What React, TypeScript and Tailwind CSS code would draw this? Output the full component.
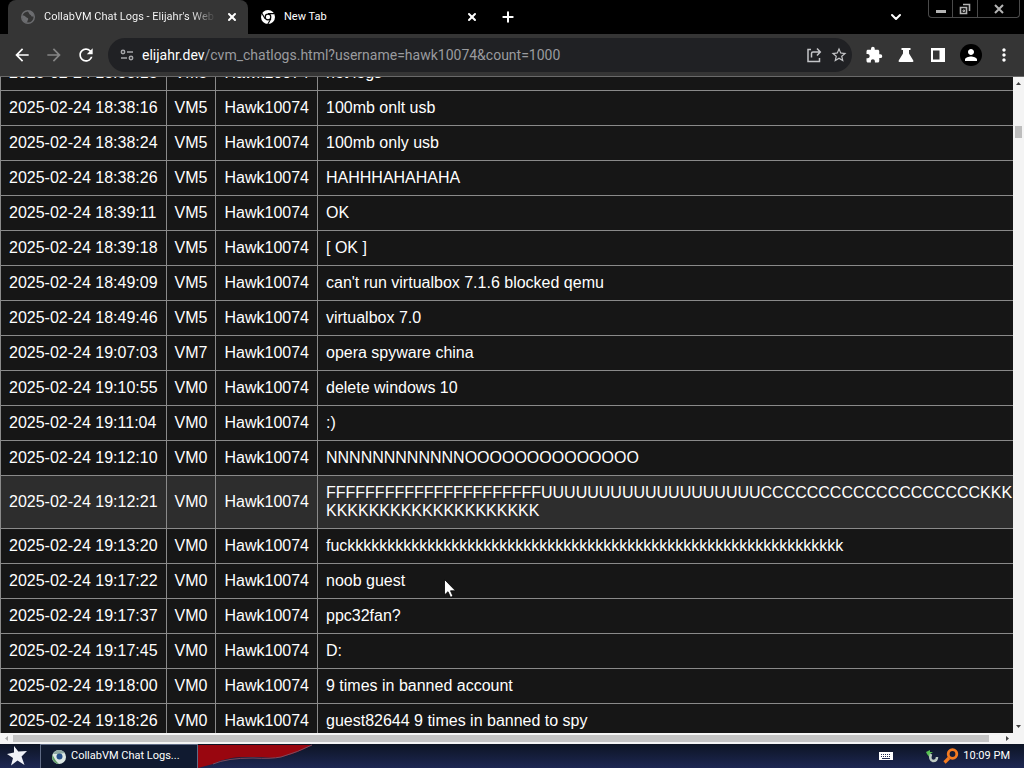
import React from "react";
import { ChevronDown, Plus, X } from "lucide-react";
import {
  MdArrowBack,
  MdArrowForward,
  MdExtension,
  MdMoreVert,
  MdPerson,
  MdRefresh,
  MdStarBorder,
} from "react-icons/md";

type LogRow = {
  time: string;
  vm: string;
  message: string;
  hovered?: boolean;
};

const USERNAME = "Hawk10074";

const rows: LogRow[] = [
  { time: "2025-02-24 18:38:13", vm: "VM5", message: "not logs" },
  { time: "2025-02-24 18:38:16", vm: "VM5", message: "100mb onlt usb" },
  { time: "2025-02-24 18:38:24", vm: "VM5", message: "100mb only usb" },
  { time: "2025-02-24 18:38:26", vm: "VM5", message: "HAHHHAHAHAHA" },
  { time: "2025-02-24 18:39:11", vm: "VM5", message: "OK" },
  { time: "2025-02-24 18:39:18", vm: "VM5", message: "[ OK ]" },
  {
    time: "2025-02-24 18:49:09",
    vm: "VM5",
    message: "can't run virtualbox 7.1.6 blocked qemu",
  },
  { time: "2025-02-24 18:49:46", vm: "VM5", message: "virtualbox 7.0" },
  { time: "2025-02-24 19:07:03", vm: "VM7", message: "opera spyware china" },
  { time: "2025-02-24 19:10:55", vm: "VM0", message: "delete windows 10" },
  { time: "2025-02-24 19:11:04", vm: "VM0", message: ":)" },
  {
    time: "2025-02-24 19:12:10",
    vm: "VM0",
    message: "NNNNNNNNNNNNOOOOOOOOOOOOOO",
  },
  {
    time: "2025-02-24 19:12:21",
    vm: "VM0",
    message:
      "FFFFFFFFFFFFFFFFFFFFFFUUUUUUUUUUUUUUUUUUUCCCCCCCCCCCCCCCCCCCKKKKKKKKKKKKKKKKKKKKKKK",
    hovered: true,
  },
  {
    time: "2025-02-24 19:13:20",
    vm: "VM0",
    message: "fuckkkkkkkkkkkkkkkkkkkkkkkkkkkkkkkkkkkkkkkkkkkkkkkkkkkkkkkkkkkkkk",
  },
  { time: "2025-02-24 19:17:22", vm: "VM0", message: "noob guest" },
  { time: "2025-02-24 19:17:37", vm: "VM0", message: "ppc32fan?" },
  { time: "2025-02-24 19:17:45", vm: "VM0", message: "D:" },
  { time: "2025-02-24 19:18:00", vm: "VM0", message: "9 times in banned account" },
  {
    time: "2025-02-24 19:18:26",
    vm: "VM0",
    message: "guest82644 9 times in banned to spy",
  },
];

function ChromeLogo() {
  return (
    <svg viewBox="0 0 16 16" className="size-4 shrink-0" aria-hidden="true">
      <circle cx="8" cy="8" r="7" fill="#fff" />
      <circle cx="8" cy="8" r="3.4" fill="#000" />
      <circle cx="8" cy="8" r="2.2" fill="#fff" />
      <path
        d="M8 4.6h6.4M5.1 9.7 1.9 4.2M10.9 9.7l-3.2 5.5"
        stroke="#000"
        strokeWidth="1.1"
        fill="none"
      />
    </svg>
  );
}

function GlobeIcon() {
  return (
    <svg viewBox="0 0 16 16" className="size-4 shrink-0" aria-hidden="true">
      <circle cx="8" cy="8" r="6.3" fill="none" stroke="#6c6d70" strokeWidth="1.4" />
      <path
        d="M2 6.5c2-.4 3 .2 3.600 1.300.6 1.200 2.400.6 2.600 2 .2 1.300-1 1.500-1 4l-2.200-.5C3 12 1.800 10 2 6.500zM8 2c0 1.500 1 1.700 1.200 2.700.2 1.100 1.600.8 2 2 .4 1.100 1.700.8 2.800.8C13.800 4.500 11.500 2 8 2z"
        fill="#6c6d70"
      />
    </svg>
  );
}

function TabStrip() {
  return (
    <header className="flex h-[34px] shrink-0 items-stretch bg-black pl-2">
      <div className="flex w-60 items-center gap-2 rounded-t-lg bg-[#353535] pl-3 pr-2 text-white">
        <GlobeIcon />
        <span className="min-w-0 flex-1 overflow-hidden whitespace-nowrap bg-linear-to-r from-white from-85% to-transparent bg-clip-text text-[11px] text-transparent">
          CollabVM Chat Logs - Elijahr's Web
        </span>
        <button aria-label="Close tab" className="grid size-4 place-items-center">
          <X className="size-3" strokeWidth={4} />
        </button>
      </div>
      <div className="flex w-60 items-center gap-2 pl-3 pr-2 text-white">
        <ChromeLogo />
        <span className="min-w-0 flex-1 text-[11px]">New Tab</span>
        <button aria-label="Close tab" className="grid size-4 place-items-center">
          <X className="size-3" strokeWidth={4} />
        </button>
      </div>
      <button aria-label="New tab" className="grid w-10 place-items-center text-white">
        <Plus className="size-4" strokeWidth={3} />
      </button>
      <div className="flex-1" />
      <button aria-label="Search tabs" className="mr-6 text-white">
        <ChevronDown className="size-4" strokeWidth={3} />
      </button>
      <div className="mr-1 flex h-[18px] rounded-b border border-t-0 border-[#4a4a4a] text-[#b4b4b4]">
        <button aria-label="Minimize" className="grid w-6 place-items-center border-r border-[#4a4a4a]">
          <svg viewBox="0 0 12 12" className="size-3">
            <path d="M1 7h10v3H1z" fill="currentColor" />
          </svg>
        </button>
        <button aria-label="Restore" className="grid w-[25px] place-items-center border-r border-[#4a4a4a]">
          <svg viewBox="0 0 12 12" className="size-3" fill="none" stroke="currentColor">
            <path d="M4 1.500h6.500V8M1.500 4.500h6v6h-6z" strokeWidth="1.600" />
            <path d="M4 7h1.500v1.500H4z" strokeWidth="1" />
          </svg>
        </button>
        <button aria-label="Close" className="grid w-[41px] place-items-center">
          <svg viewBox="0 0 12 12" className="size-3" fill="none" stroke="currentColor">
            <path d="m2 2 8 8m0-8-8 8" strokeWidth="2" />
          </svg>
        </button>
      </div>
    </header>
  );
}

function Toolbar() {
  return (
    <nav className="flex h-[43px] shrink-0 items-center border-b border-[#6a6a6a] bg-[#353535] pl-3 pr-2.5 text-white">
      <div className="flex gap-3">
        <button aria-label="Back">
          <MdArrowBack className="size-5" stroke="currentColor" />
        </button>
        <button aria-label="Forward" className="text-[#858585]">
          <MdArrowForward className="size-5" />
        </button>
        <button aria-label="Reload">
          <MdRefresh className="size-5" stroke="currentColor" />
        </button>
      </div>
      <div className="ml-3 mr-3 flex h-[34px] min-w-0 flex-1 items-center rounded-full bg-[#202124] pl-3 pr-1">
        <svg viewBox="0 0 14 12" className="mr-2 w-3.5 shrink-0" fill="none" stroke="#a5a6a9" strokeWidth="1.500">
          <circle cx="3" cy="3" r="1.700" />
          <path d="M7 3h6M1 9h6" />
          <circle cx="11" cy="9" r="1.700" />
        </svg>
        <a href="#" className="min-w-0 flex-1 truncate text-sm text-[#9a9b9f]">
          <span className="text-white">elijahr.dev</span>
          /cvm_chatlogs.html?username=hawk10074&amp;count=1000
        </a>
        <button aria-label="Share" className="mr-2 text-[#c4c5c8]">
          <svg viewBox="0 0 16 16" className="size-4" fill="none" stroke="currentColor" strokeWidth="1.500">
            <path d="M5 2.500H2v12h11.500V11M5.500 10.500V6.500q0-1.500 1.500-1.500H14M11 1.500 14.300 5 11 8.500" />
          </svg>
        </button>
        <button aria-label="Bookmark this page" className="text-[#c4c5c8]">
          <MdStarBorder className="size-[18px]" stroke="currentColor" />
        </button>
      </div>
      <div className="flex items-center gap-3">
        <button aria-label="Extensions" className="grid size-5 place-items-center">
          <MdExtension className="size-[18px]" />
        </button>
        <button aria-label="Experiments" className="grid size-5 place-items-center">
          <svg viewBox="0 0 16 16" className="size-4" fill="currentColor">
            <path d="M3.500 1h9v2H11v3.500l4.300 7q.6 1.500-1 1.500H1.700q-1.600 0-1-1.500l4.300-7V3H3.500z" />
          </svg>
        </button>
        <button aria-label="Side panel" className="grid size-5 place-items-center">
          <svg viewBox="0 0 16 16" className="size-4">
            <path d="M1 1h14v14H1z" fill="#fff" />
            <path d="M3 3.500h6.500v9H3z" fill="#353535" />
          </svg>
        </button>
        <button aria-label="Profile" className="grid size-[22px] place-items-center rounded-full bg-black">
          <MdPerson className="size-[18px]" />
        </button>
        <button aria-label="Menu" className="grid size-5 place-items-center">
          <MdMoreVert className="size-5" />
        </button>
      </div>
    </nav>
  );
}

function ChatLogTable() {
  return (
    <table className="-mt-[22px] w-[calc(100%+12px)] border-collapse text-base leading-[18px] text-white">
      <tbody>
        {rows.map((row) => (
          <tr key={row.time} className={row.hovered ? "bg-[#2d2d2d]" : "bg-[#161616]"}>
            <td className="whitespace-nowrap border border-[#8a8a8a] p-2">{row.time}</td>
            <td className="whitespace-nowrap border border-[#8a8a8a] p-2">{row.vm}</td>
            <td className="whitespace-nowrap border border-[#8a8a8a] p-2">{USERNAME}</td>
            <td className="w-full break-all border border-[#8a8a8a] p-2">{row.message}</td>
          </tr>
        ))}
      </tbody>
    </table>
  );
}

function Arrow({ className }: { className: string }) {
  return (
    <svg viewBox="0 0 5 5" className={className} aria-hidden="true">
      <path d="M0 4h5L2.500 1z" fill="#404040" />
    </svg>
  );
}

function VerticalScrollbar() {
  return (
    <div className="flex w-[11px] shrink-0 flex-col items-center bg-[#f4f4f4]">
      <Arrow className="my-1 size-[5px]" />
      <div className="flex w-full flex-1 flex-col items-center pt-9">
        <div className="h-3 w-[7px] bg-[#bebebe]" />
      </div>
      <Arrow className="my-1 size-[5px] rotate-180" />
    </div>
  );
}

function HorizontalScrollbar() {
  return (
    <div className="flex h-[11px] shrink-0 items-center bg-[#f4f4f4]">
      <Arrow className="mx-1 size-[5px] -rotate-90 opacity-40" />
      <div className="mr-3 h-[7px] flex-1 bg-[#c4c4c4]" />
      <Arrow className="ml-1 mr-3.5 size-[5px] rotate-90" />
    </div>
  );
}

function Taskbar() {
  return (
    <footer className="flex h-6 shrink-0 items-stretch bg-linear-to-b from-[#0d1424] to-[#1d2753] text-[11px] text-white">
      <button aria-label="Start" className="w-10 pl-1.5">
        <svg viewBox="0 0 22 20" className="h-5 w-[22px]">
          <path
            d="m8 0 4.300 5.500L21 5l-5.500 5.500 3 8.500-7-4.500L5 19.500 7 12 1 8l7-1.500z"
            fill="#f0f2f8"
          />
        </svg>
      </button>
      <button className="flex w-[158px] items-center gap-1 border-x border-t border-[#5f6b85] bg-[#101a30] pl-2.5">
        <svg viewBox="0 0 16 16" className="size-4 shrink-0">
          <circle cx="8" cy="8" r="7" fill="#dce8e4" />
          <path d="M2 5a7 7 0 0 1 12-1L8 5z" fill="#8fa9a4" />
          <path d="M1.500 6 5 12l3 3A7 7 0 0 1 1.500 6z" fill="#5f9d63" />
          <circle cx="8.500" cy="7.500" r="3" fill="#254f88" />
        </svg>
        <span>CollabVM Chat Logs...</span>
      </button>
      <svg viewBox="0 0 120 24" className="h-6 w-[120px]" aria-hidden="true">
        <path d="M0 1h114Q92 13 76 14 46 12 34 14T15 20L0 24z" fill="#99060f" />
        <path d="M15 20q14-6 40-6 18 1 28-1Q100 8 114 1" fill="none" stroke="#7b4a5e" />
      </svg>
      <div className="flex-1" />
      <div className="flex items-center gap-1 pr-3.5">
        <svg viewBox="0 0 14 8" className="mr-7 w-3.5" aria-hidden="true">
          <path d="M0 0h14v8H0z" fill="#fff" />
          <path d="M2 2.500h10M2 4.500h10" stroke="#222b52" strokeDasharray="1 1" />
          <path d="M3 6.500h8" stroke="#222b52" />
        </svg>
        <svg viewBox="0 0 14 14" className="size-3.5" aria-hidden="true">
          <path d="m1 3 4-2v2h3L5 5v4L2 5z" fill="#58c152" />
          <path d="M6 5q-2 6 2 7 4 0 4-4" fill="none" stroke="#bdc9c2" strokeWidth="2.500" />
        </svg>
        <svg viewBox="0 0 16 16" className="size-4" fill="none" stroke="#f47b20" aria-hidden="true">
          <circle cx="9.500" cy="6" r="4.300" strokeWidth="2.800" />
          <path d="m6 10-4.500 4.500" strokeWidth="3.200" />
        </svg>
        <time>10:09 PM</time>
      </div>
    </footer>
  );
}

export default function App() {
  return (
    <div className="relative flex h-screen flex-col overflow-hidden bg-[#161616] font-['Roboto',sans-serif]">
      <TabStrip />
      <Toolbar />
      <div className="flex min-h-0 flex-1">
        <main className="min-w-0 flex-1 overflow-hidden font-['Liberation_Sans',sans-serif]">
          <ChatLogTable />
        </main>
        <VerticalScrollbar />
      </div>
      <HorizontalScrollbar />
      <Taskbar />
      <svg
        viewBox="0 0 12 19"
        className="pointer-events-none absolute left-[444px] top-[579px] h-[19px] w-3"
        aria-hidden="true"
      >
        <path
          d="M.5.500v15.500l3.500-3.300 2.500 5.600 2.500-1-2.500-5.500h5z"
          fill="#fff"
          stroke="#000"
          strokeWidth="0.800"
        />
      </svg>
    </div>
  );
}
